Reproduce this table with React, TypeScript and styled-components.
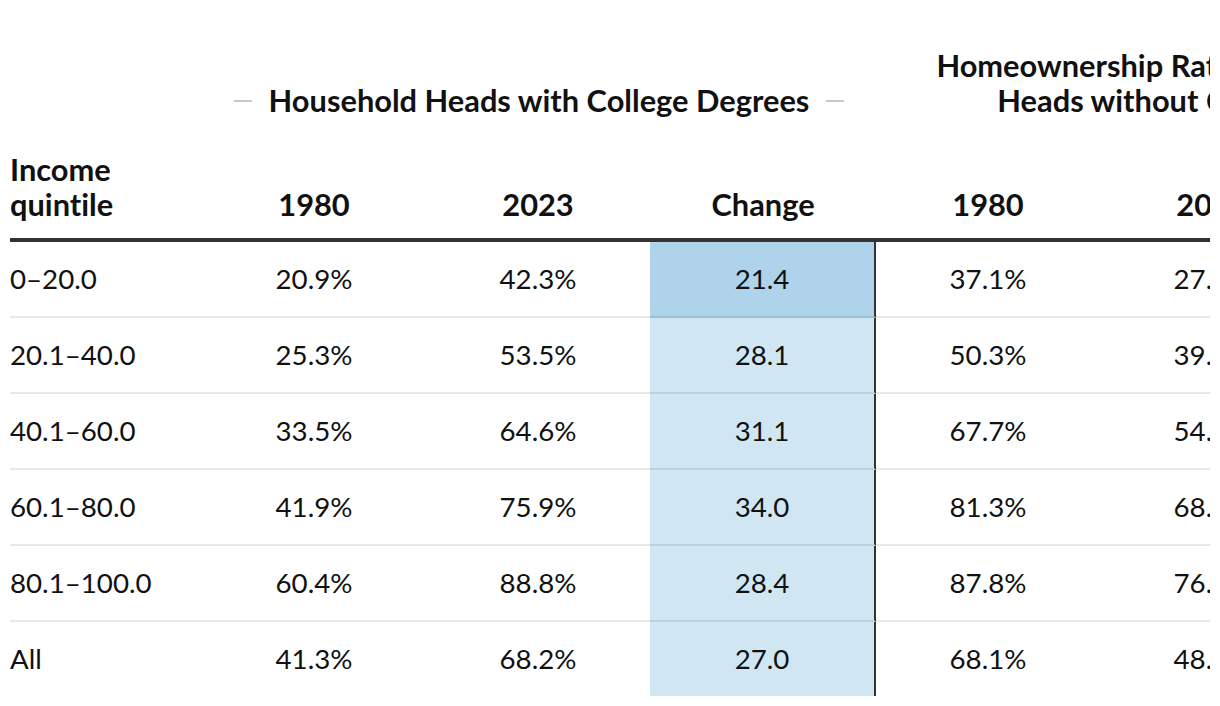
import styled, { createGlobalStyle } from 'styled-components';

const GlobalStyle = createGlobalStyle`
  html, body {
    margin: 0;
    padding: 0;
    background: #fff;
  }
  body {
    font-family: Lato, "Noto Sans", "Liberation Sans", sans-serif;
    font-variant-ligatures: none;
    color: #111;
  }
`;

const Page = styled.div`
  padding: 48px 10px 0 10px;
`;

const Scroller = styled.div`
  width: 1200px;
  overflow: hidden;
`;

const Table = styled.table`
  table-layout: fixed;
  width: 1540px;
  border-collapse: separate;
  border-spacing: 0;
  font-size: 27.7px;
  line-height: 35px;
`;

const SpannerCell = styled.th`
  padding: 0 0 17px 0;
  vertical-align: bottom;
  font-size: 30.8px;
  font-weight: 700;
`;

const Spanner = styled.div`
  display: flex;
  align-items: center;
  gap: 17px;
  padding: 0 32px;
`;

const SpannerLine = styled.span`
  flex: 1 1 0;
  min-width: 0;
  height: 2px;
  background: #c8c8c8;
`;

const SpannerText = styled.span`
  flex: 0 1 auto;
  text-align: center;
`;

const HeadCell = styled.th<{ $left?: boolean }>`
  padding: 17px 0 16px 0;
  vertical-align: bottom;
  font-size: 30.8px;
  font-weight: 700;
  text-align: ${(p) => (p.$left ? 'left' : 'center')};
  border-bottom: 4px solid #333;
`;

const Row = styled.tr<{ $last?: boolean }>`
  & > td {
    border-bottom: ${(p) => (p.$last ? 'none' : '2px solid rgba(0, 0, 0, 0.09)')};
  }
`;

const Cell = styled.td<{ $left?: boolean }>`
  padding: 19px 0 20px 0;
  font-weight: 400;
  text-align: ${(p) => (p.$left ? 'left' : 'center')};
  white-space: nowrap;
`;

const ChangeCell = styled(Cell)<{ $shade: string }>`
  background: ${(p) => p.$shade};
  border-right: 2px solid #333;
`;

interface IGroup {
  y1980: number;
  y2023: number;
  change: number;
}

interface IRow {
  quintile: string;
  college: IGroup;
  noCollege: IGroup;
}

const rows: IRow[] = [
  {
    quintile: '0–20.0',
    college: { y1980: 20.9, y2023: 42.3, change: 21.4 },
    noCollege: { y1980: 37.1, y2023: 27.4, change: -9.7 },
  },
  {
    quintile: '20.1–40.0',
    college: { y1980: 25.3, y2023: 53.5, change: 28.1 },
    noCollege: { y1980: 50.3, y2023: 39.6, change: -10.7 },
  },
  {
    quintile: '40.1–60.0',
    college: { y1980: 33.5, y2023: 64.6, change: 31.1 },
    noCollege: { y1980: 67.7, y2023: 54.2, change: -13.5 },
  },
  {
    quintile: '60.1–80.0',
    college: { y1980: 41.9, y2023: 75.9, change: 34.0 },
    noCollege: { y1980: 81.3, y2023: 68.5, change: -12.8 },
  },
  {
    quintile: '80.1–100.0',
    college: { y1980: 60.4, y2023: 88.8, change: 28.4 },
    noCollege: { y1980: 87.8, y2023: 76.1, change: -11.7 },
  },
  {
    quintile: 'All',
    college: { y1980: 41.3, y2023: 68.2, change: 27.0 },
    noCollege: { y1980: 68.1, y2023: 48.9, change: -19.2 },
  },
];

const pct = (v: number) => `${v.toFixed(1)}%`;

function App() {
  const minCollege = Math.min(...rows.map((r) => r.college.change));
  const minNoCollege = Math.min(...rows.map((r) => r.noCollege.change));

  return (
    <Page>
      <GlobalStyle />
      <Scroller>
        <Table>
          <colgroup>
            <col style={{ width: 192 }} />
            <col style={{ width: 224 }} />
            <col style={{ width: 224 }} />
            <col style={{ width: 226 }} />
            <col style={{ width: 224 }} />
            <col style={{ width: 224 }} />
            <col style={{ width: 226 }} />
          </colgroup>
          <thead>
            <tr>
              <SpannerCell />
              <SpannerCell colSpan={3}>
                <Spanner>
                  <SpannerLine />
                  <SpannerText>Household Heads with College Degrees</SpannerText>
                  <SpannerLine />
                </Spanner>
              </SpannerCell>
              <SpannerCell colSpan={3}>
                <Spanner>
                  <SpannerLine />
                  <SpannerText>
                    Homeownership Rate among Household Heads without College
                    Degrees
                  </SpannerText>
                  <SpannerLine />
                </Spanner>
              </SpannerCell>
            </tr>
            <tr>
              <HeadCell $left>
                Income
                <br />
                quintile
              </HeadCell>
              <HeadCell>1980</HeadCell>
              <HeadCell>2023</HeadCell>
              <HeadCell>Change</HeadCell>
              <HeadCell>1980</HeadCell>
              <HeadCell>2023</HeadCell>
              <HeadCell>Change</HeadCell>
            </tr>
          </thead>
          <tbody>
            {rows.map((r, i) => (
              <Row key={r.quintile} $last={i === rows.length - 1}>
                <Cell $left>{r.quintile}</Cell>
                <Cell>{pct(r.college.y1980)}</Cell>
                <Cell>{pct(r.college.y2023)}</Cell>
                <ChangeCell
                  $shade={r.college.change === minCollege ? '#aed3ea' : '#d0e7f3'}
                >
                  {r.college.change.toFixed(1)}
                </ChangeCell>
                <Cell>{pct(r.noCollege.y1980)}</Cell>
                <Cell>{pct(r.noCollege.y2023)}</Cell>
                <ChangeCell
                  $shade={
                    r.noCollege.change === minNoCollege ? '#f3c9a8' : '#f8e0cc'
                  }
                >
                  {r.noCollege.change.toFixed(1)}
                </ChangeCell>
              </Row>
            ))}
          </tbody>
        </Table>
      </Scroller>
    </Page>
  );
}

export default App;
